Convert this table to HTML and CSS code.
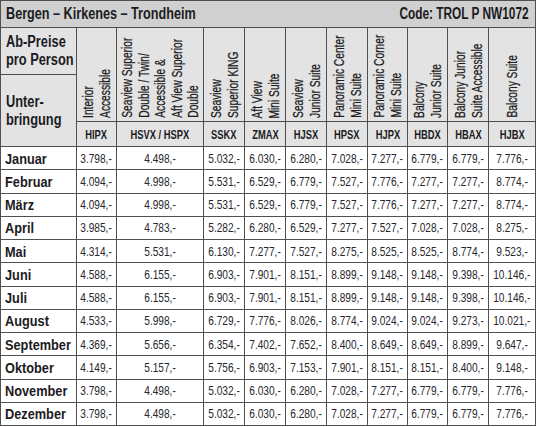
FILE: index.html
```html
<!DOCTYPE html>
<html lang="de">
<head>
<meta charset="utf-8">
<title>Bergen – Kirkenes – Trondheim</title>
<link rel="stylesheet" href="styles.css">
</head>
<body>
<div class="grid">
  <div class="title">
    <span class="sq sq-l">Bergen – Kirkenes – Trondheim</span>
    <span class="sq sq-r">Code: TROL P NW1072</span>
  </div>

  <div class="cell head-label ab"><span class="sq sq-l">Ab-Preise<br>pro Person</span></div>
  <div class="cell head-label unter"><span class="sq sq-l">Unter-<br>bringung</span></div>

  <div class="cell rot"><div class="vt"><span>Interior<br>Accessible</span></div></div>
  <div class="cell rot"><div class="vt"><span>Seaview Superior<br>Double / Twin/<br>Accessible &amp;<br>Aft View Superior<br>Double</span></div></div>
  <div class="cell rot"><div class="vt"><span>Seaview<br>Superior KING</span></div></div>
  <div class="cell rot"><div class="vt"><span>Aft View<br>Mini Suite</span></div></div>
  <div class="cell rot"><div class="vt"><span>Seaview<br>Junior Suite</span></div></div>
  <div class="cell rot"><div class="vt"><span>Panoramic Center<br>Mini Suite</span></div></div>
  <div class="cell rot"><div class="vt"><span>Panoramic Corner<br>Mini Suite</span></div></div>
  <div class="cell rot"><div class="vt"><span>Balcony<br>Junior Suite</span></div></div>
  <div class="cell rot"><div class="vt"><span>Balcony Junior<br>Suite Accessible</span></div></div>
  <div class="cell rot"><div class="vt"><span>Balcony Suite</span></div></div>

  <div class="cell code"><span class="sq">HIPX</span></div>
  <div class="cell code"><span class="sq">HSVX / HSPX</span></div>
  <div class="cell code"><span class="sq">SSKX</span></div>
  <div class="cell code"><span class="sq">ZMAX</span></div>
  <div class="cell code"><span class="sq">HJSX</span></div>
  <div class="cell code"><span class="sq">HPSX</span></div>
  <div class="cell code"><span class="sq">HJPX</span></div>
  <div class="cell code"><span class="sq">HBDX</span></div>
  <div class="cell code"><span class="sq">HBAX</span></div>
  <div class="cell code"><span class="sq">HJBX</span></div>

  <div class="cell month"><span class="sq sq-l">Januar</span></div>
  <div class="cell num"><span class="sq">3.798,-</span></div><div class="cell num"><span class="sq">4.498,-</span></div><div class="cell num"><span class="sq">5.032,-</span></div><div class="cell num"><span class="sq">6.030,-</span></div><div class="cell num"><span class="sq">6.280,-</span></div><div class="cell num"><span class="sq">7.028,-</span></div><div class="cell num"><span class="sq">7.277,-</span></div><div class="cell num"><span class="sq">6.779,-</span></div><div class="cell num"><span class="sq">6.779,-</span></div><div class="cell num"><span class="sq">7.776,-</span></div>

  <div class="cell month"><span class="sq sq-l">Februar</span></div>
  <div class="cell num"><span class="sq">4.094,-</span></div><div class="cell num"><span class="sq">4.998,-</span></div><div class="cell num"><span class="sq">5.531,-</span></div><div class="cell num"><span class="sq">6.529,-</span></div><div class="cell num"><span class="sq">6.779,-</span></div><div class="cell num"><span class="sq">7.527,-</span></div><div class="cell num"><span class="sq">7.776,-</span></div><div class="cell num"><span class="sq">7.277,-</span></div><div class="cell num"><span class="sq">7.277,-</span></div><div class="cell num"><span class="sq">8.774,-</span></div>

  <div class="cell month"><span class="sq sq-l">März</span></div>
  <div class="cell num"><span class="sq">4.094,-</span></div><div class="cell num"><span class="sq">4.998,-</span></div><div class="cell num"><span class="sq">5.531,-</span></div><div class="cell num"><span class="sq">6.529,-</span></div><div class="cell num"><span class="sq">6.779,-</span></div><div class="cell num"><span class="sq">7.527,-</span></div><div class="cell num"><span class="sq">7.776,-</span></div><div class="cell num"><span class="sq">7.277,-</span></div><div class="cell num"><span class="sq">7.277,-</span></div><div class="cell num"><span class="sq">8.774,-</span></div>

  <div class="cell month"><span class="sq sq-l">April</span></div>
  <div class="cell num"><span class="sq">3.985,-</span></div><div class="cell num"><span class="sq">4.783,-</span></div><div class="cell num"><span class="sq">5.282,-</span></div><div class="cell num"><span class="sq">6.280,-</span></div><div class="cell num"><span class="sq">6.529,-</span></div><div class="cell num"><span class="sq">7.277,-</span></div><div class="cell num"><span class="sq">7.527,-</span></div><div class="cell num"><span class="sq">7.028,-</span></div><div class="cell num"><span class="sq">7.028,-</span></div><div class="cell num"><span class="sq">8.275,-</span></div>

  <div class="cell month"><span class="sq sq-l">Mai</span></div>
  <div class="cell num"><span class="sq">4.314,-</span></div><div class="cell num"><span class="sq">5.531,-</span></div><div class="cell num"><span class="sq">6.130,-</span></div><div class="cell num"><span class="sq">7.277,-</span></div><div class="cell num"><span class="sq">7.527,-</span></div><div class="cell num"><span class="sq">8.275,-</span></div><div class="cell num"><span class="sq">8.525,-</span></div><div class="cell num"><span class="sq">8.525,-</span></div><div class="cell num"><span class="sq">8.774,-</span></div><div class="cell num"><span class="sq">9.523,-</span></div>

  <div class="cell month"><span class="sq sq-l">Juni</span></div>
  <div class="cell num"><span class="sq">4.588,-</span></div><div class="cell num"><span class="sq">6.155,-</span></div><div class="cell num"><span class="sq">6.903,-</span></div><div class="cell num"><span class="sq">7.901,-</span></div><div class="cell num"><span class="sq">8.151,-</span></div><div class="cell num"><span class="sq">8.899,-</span></div><div class="cell num"><span class="sq">9.148,-</span></div><div class="cell num"><span class="sq">9.148,-</span></div><div class="cell num"><span class="sq">9.398,-</span></div><div class="cell num"><span class="sq">10.146,-</span></div>

  <div class="cell month"><span class="sq sq-l">Juli</span></div>
  <div class="cell num"><span class="sq">4.588,-</span></div><div class="cell num"><span class="sq">6.155,-</span></div><div class="cell num"><span class="sq">6.903,-</span></div><div class="cell num"><span class="sq">7.901,-</span></div><div class="cell num"><span class="sq">8.151,-</span></div><div class="cell num"><span class="sq">8.899,-</span></div><div class="cell num"><span class="sq">9.148,-</span></div><div class="cell num"><span class="sq">9.148,-</span></div><div class="cell num"><span class="sq">9.398,-</span></div><div class="cell num"><span class="sq">10.146,-</span></div>

  <div class="cell month"><span class="sq sq-l">August</span></div>
  <div class="cell num"><span class="sq">4.533,-</span></div><div class="cell num"><span class="sq">5.998,-</span></div><div class="cell num"><span class="sq">6.729,-</span></div><div class="cell num"><span class="sq">7.776,-</span></div><div class="cell num"><span class="sq">8.026,-</span></div><div class="cell num"><span class="sq">8.774,-</span></div><div class="cell num"><span class="sq">9.024,-</span></div><div class="cell num"><span class="sq">9.024,-</span></div><div class="cell num"><span class="sq">9.273,-</span></div><div class="cell num"><span class="sq">10.021,-</span></div>

  <div class="cell month"><span class="sq sq-l">September</span></div>
  <div class="cell num"><span class="sq">4.369,-</span></div><div class="cell num"><span class="sq">5.656,-</span></div><div class="cell num"><span class="sq">6.354,-</span></div><div class="cell num"><span class="sq">7.402,-</span></div><div class="cell num"><span class="sq">7.652,-</span></div><div class="cell num"><span class="sq">8.400,-</span></div><div class="cell num"><span class="sq">8.649,-</span></div><div class="cell num"><span class="sq">8.649,-</span></div><div class="cell num"><span class="sq">8.899,-</span></div><div class="cell num"><span class="sq">9.647,-</span></div>

  <div class="cell month"><span class="sq sq-l">Oktober</span></div>
  <div class="cell num"><span class="sq">4.149,-</span></div><div class="cell num"><span class="sq">5.157,-</span></div><div class="cell num"><span class="sq">5.756,-</span></div><div class="cell num"><span class="sq">6.903,-</span></div><div class="cell num"><span class="sq">7.153,-</span></div><div class="cell num"><span class="sq">7.901,-</span></div><div class="cell num"><span class="sq">8.151,-</span></div><div class="cell num"><span class="sq">8.151,-</span></div><div class="cell num"><span class="sq">8.400,-</span></div><div class="cell num"><span class="sq">9.148,-</span></div>

  <div class="cell month"><span class="sq sq-l">November</span></div>
  <div class="cell num"><span class="sq">3.798,-</span></div><div class="cell num"><span class="sq">4.498,-</span></div><div class="cell num"><span class="sq">5.032,-</span></div><div class="cell num"><span class="sq">6.030,-</span></div><div class="cell num"><span class="sq">6.280,-</span></div><div class="cell num"><span class="sq">7.028,-</span></div><div class="cell num"><span class="sq">7.277,-</span></div><div class="cell num"><span class="sq">6.779,-</span></div><div class="cell num"><span class="sq">6.779,-</span></div><div class="cell num"><span class="sq">7.776,-</span></div>

  <div class="cell month"><span class="sq sq-l">Dezember</span></div>
  <div class="cell num"><span class="sq">3.798,-</span></div><div class="cell num"><span class="sq">4.498,-</span></div><div class="cell num"><span class="sq">5.032,-</span></div><div class="cell num"><span class="sq">6.030,-</span></div><div class="cell num"><span class="sq">6.280,-</span></div><div class="cell num"><span class="sq">7.028,-</span></div><div class="cell num"><span class="sq">7.277,-</span></div><div class="cell num"><span class="sq">6.779,-</span></div><div class="cell num"><span class="sq">6.779,-</span></div><div class="cell num"><span class="sq">7.776,-</span></div>
</div>
</body>
</html>
```

FILE: styles.css
```css
html, body {
  margin: 0;
  padding: 0;
  background: #ffffff;
}

body {
  font-family: "Liberation Sans", Arial, sans-serif;
  color: #1b1b22;
}

.grid {
  display: grid;
  width: 536px;
  box-sizing: border-box;
  grid-template-columns: 75px 39px 86px 40px 40px 40px 40px 39px 39px 40px 46px;
  grid-template-rows: 26px 46px 46px 24px repeat(12, 22.25px);
  gap: 1px;
  padding: 1px;
  background: #505050;
}

.cell {
  background: #e3e3e3;
  overflow: hidden;
  min-width: 0;
}

/* condensed text: the reference uses a condensed face */
.sq {
  display: inline-block;
  white-space: nowrap;
  transform: scaleX(0.78);
  transform-origin: center center;
}

.sq-l {
  transform-origin: left center;
}

.sq-r {
  transform-origin: right center;
}

.title {
  grid-column: 1 / -1;
  background: #d0d0d0;
  display: flex;
  justify-content: space-between;
  align-items: center;
  padding: 0 6px 0 5px;
  font-weight: bold;
  font-size: 16px;
  overflow: hidden;
}

.title .sq-l {
  transform: scaleX(0.79);
  transform-origin: left center;
}

.title .sq-r {
  transform: scaleX(0.74);
  transform-origin: right center;
}

.head-label {
  font-weight: bold;
  font-size: 16px;
  line-height: 18px;
  display: flex;
  align-items: center;
  padding-left: 5px;
}

.head-label .sq {
  transform: scaleX(0.8);
}

.ab {
  grid-column: 1;
  grid-row: 2;
}

.unter {
  grid-column: 1;
  grid-row: 3 / span 2;
}

.rot {
  grid-row: 2 / span 2;
  display: flex;
  justify-content: center;
  align-items: flex-end;
  padding-bottom: 3px;
}

.vt {
  transform: scaleY(0.73);
  transform-origin: center bottom;
}

.vt span {
  display: block;
  writing-mode: vertical-rl;
  transform: rotate(180deg);
  font-size: 14px;
  line-height: 16.5px;
  white-space: nowrap;
  -webkit-text-stroke: 0.25px #1b1b22;
}

.code {
  grid-row: 4;
  display: flex;
  align-items: center;
  justify-content: center;
  font-weight: bold;
  font-size: 13px;
}

.code .sq {
  transform: scaleX(0.72);
}

.month {
  background: #ffffff;
  font-weight: bold;
  font-size: 15px;
  display: flex;
  align-items: center;
  padding-left: 4px;
}

.month .sq {
  transform: scaleX(0.85);
}

.num {
  background: #ffffff;
  font-size: 13.5px;
  color: #26262c;
  display: flex;
  align-items: center;
  justify-content: center;
}

.num .sq {
  transform: scaleX(0.75);
}
```
